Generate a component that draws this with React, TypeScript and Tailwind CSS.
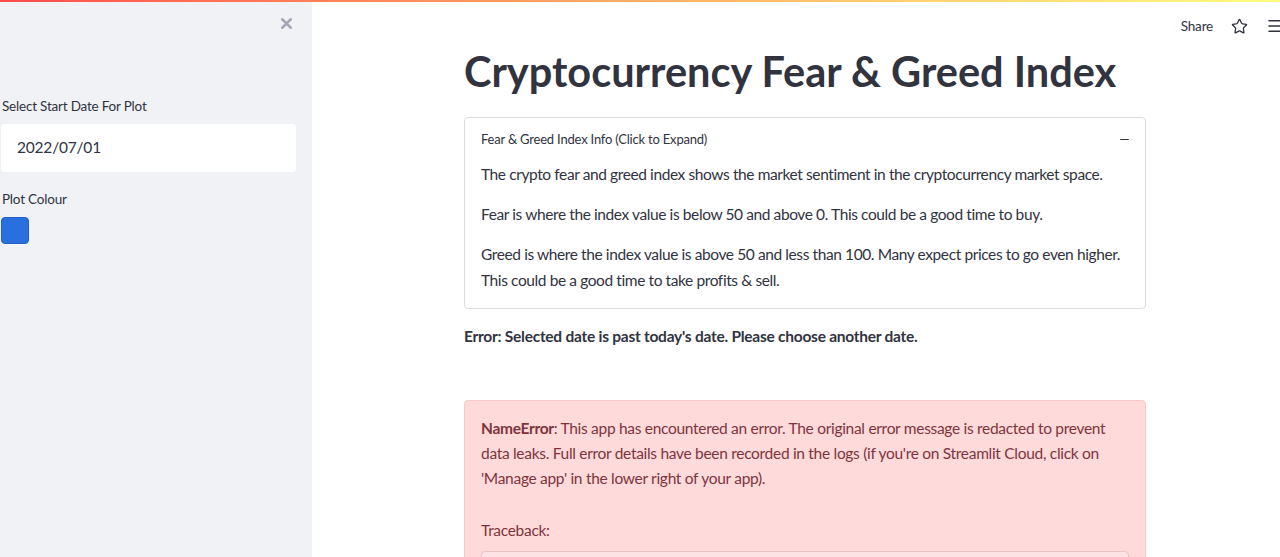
import { X, Star, Menu, Minus } from 'lucide-react';

export default function App() {
  return (
    <div
      className="relative flex h-[557px] w-[1280px] overflow-hidden bg-white text-[#31333f]"
      style={{ fontFamily: 'Lato, "Noto Sans", sans-serif' }}
    >
      {/* top decoration line */}
      <div className="absolute left-0 right-0 top-0 z-10 h-[2px] bg-gradient-to-r from-[#ff4b4b] to-[#fffd80]" />

      {/* sidebar */}
      <aside className="relative flex w-[312px] shrink-0 flex-col bg-[#f0f2f6]">
        <button className="absolute right-[17px] top-[15px] text-[#a3a8b4]">
          <X size={17} strokeWidth={3.6} />
        </button>
        <div className="flex flex-col pl-[1px] pr-[16px] pt-[97px]">
          <label className="mb-[9px] pl-[1px] text-[13.5px] leading-[18px] tracking-[-0.2px]">Select Start Date For Plot</label>
          <div className="flex h-[48px] w-[295px] items-center rounded-[4px] bg-white pl-[16px] text-[15.5px] tracking-[-0.2px]">
            2022/07/01
          </div>
          <label className="mb-[9px] mt-[18px] pl-[1px] text-[13.5px] leading-[18px] tracking-[-0.2px]">Plot Colour</label>
          <div className="h-[27px] w-[28px] rounded-[4px] border border-[#1f5fc4] bg-[#2a6fdf]" />
        </div>
      </aside>

      {/* main */}
      <main className="relative flex-1">
        <div className="absolute right-0 top-[16px] flex items-center gap-[18px] text-[#31333f]">
          <span className="text-[13.5px] tracking-[-0.2px]">Share</span>
          <Star size={17} strokeWidth={1.8} />
          <Menu size={18} strokeWidth={2} className="mr-[-4px]" />
        </div>

        <div className="ml-[152px] w-[682px] pt-[45px]">
          <h1 className="text-[41.5px] font-bold leading-[52px]">
            Cryptocurrency Fear &amp; Greed Index
          </h1>

          <div className="mt-[20px] rounded-[4px] border border-[#dcdde1] px-[16px] pb-[15px] pt-[12px]">
            <div className="flex items-center justify-between">
              <span className="text-[13px] tracking-[-0.2px]">Fear &amp; Greed Index Info (Click to Expand)</span>
              <Minus size={13} strokeWidth={2.2} className="mr-[-2px]" />
            </div>
            <div className="mt-[11px] space-y-[14px] text-[15.5px] leading-[26px] tracking-[-0.4px]">
              <p>The crypto fear and greed index shows the market sentiment in the cryptocurrency market space.</p>
              <p>Fear is where the index value is below 50 and above 0. This could be a good time to buy.</p>
              <p>
                Greed is where the index value is above 50 and less than 100. Many expect prices to go even higher.
                This could be a good time to take profits &amp; sell.
              </p>
            </div>
          </div>

          <p className="mt-[14px] text-[15.5px] font-bold leading-[26px] tracking-[-0.25px]">
            Error: Selected date is past today's date. Please choose another date.
          </p>

          <div className="mt-[51px] rounded-[4px] border border-[#f8c7ca] bg-[#ffdadb] px-[16px] pt-[15px] text-[15.5px] leading-[25px] tracking-[-0.3px] text-[#7d353b]">
            <p>
              <span className="font-bold">NameError</span>: This app has encountered an error. The original error message is
              redacted to prevent data leaks. Full error details have been recorded in the logs (if you're on Streamlit
              Cloud, click on 'Manage app' in the lower right of your app).
            </p>
            <p className="mt-[27px]">Traceback:</p>
            <div className="mt-[8px] h-[40px] rounded-t-[4px] border border-[#e8c2c4] bg-[#fde3e4]" />
          </div>
        </div>
      </main>
    </div>
  );
}
